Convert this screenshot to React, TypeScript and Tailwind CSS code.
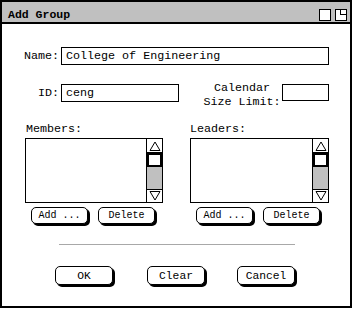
import React from "react";

function Up() {
  return (
    <svg width="14" height="12" viewBox="0 0 14 12" className="block">
      <path d="M7 2 L12 10.5 L2 10.5 Z" fill="white" stroke="black" strokeWidth="1" />
    </svg>
  );
}
function Down() {
  return (
    <svg width="14" height="12" viewBox="0 0 14 12" className="block">
      <path d="M7 10 L12 1.5 L2 1.5 Z" fill="white" stroke="black" strokeWidth="1" />
    </svg>
  );
}

function ListBox({ w }: { w: string }) {
  return (
    <div className={`${w} mt-[2px] h-[65px] border border-black bg-white flex justify-end`}>
      <div className="w-[16px] h-full border-l border-black flex flex-col">
        <div className="h-[14px] border-b border-black flex items-center justify-center">
          <Up />
        </div>
        <div className="h-[14px] border-2 border-black bg-white" />
        <div className="flex-1 bg-[#c0c0c0]" />
        <div className="h-[13px] border-t border-black flex items-center justify-center">
          <Down />
        </div>
      </div>
    </div>
  );
}

function SmallBtn({ label, cls }: { label: string; cls: string }) {
  return (
    <div
      className={`${cls} w-[57px] h-[17px] rounded-[5px] border border-black bg-white shadow-[2px_2px_0_0_#000] flex items-center justify-center text-[10px] leading-[12px]`}
    >
      {label}
    </div>
  );
}

function BigBtn({ label, cls }: { label: string; cls: string }) {
  return (
    <div
      className={`${cls} w-[58px] h-[19px] rounded-[5px] border border-black bg-white shadow-[2px_2px_0_0_#000] flex items-center justify-center text-[11.3px] leading-[14px]`}
    >
      {label}
    </div>
  );
}

export default function App() {
  return (
    <div className="w-[354px] h-[309px] bg-white font-['Liberation_Mono',monospace] text-black text-[11.7px] leading-[14px]">
      <div className="w-[352px] h-[308px] border-2 border-black flex flex-col">
        {/* Title bar */}
        <div className="h-[22px] shrink-0 bg-[#c0c0c0] border-b-2 border-black flex items-start justify-between pl-[6px] pr-[3px]">
          <div className="mt-[6px] font-bold text-[11.5px] leading-[14px]">Add Group</div>
          <div className="mt-[7px] flex gap-[4px]">
            <div className="w-[12px] h-[12px] border border-black bg-white" />
            <div className="w-[12px] h-[12px] border border-black bg-white relative">
              <div className="absolute left-[4px] top-0 w-[6px] h-[5px] border-l border-b border-black" />
            </div>
          </div>
        </div>

        {/* Body */}
        <div className="flex flex-col">
          {/* Name row */}
          <div className="mt-[23px] flex items-center h-[18px]">
            <div className="w-[57px] text-right">Name:</div>
            <div className="ml-[2px] w-[268px] h-[18px] border border-black flex items-center pl-[4px]">
              College of Engineering
            </div>
          </div>

          {/* ID row */}
          <div className="mt-[19px] flex items-start h-[18px]">
            <div className="w-[57px] h-[18px] flex items-center justify-end">ID:</div>
            <div className="ml-[2px] w-[118px] h-[18px] border border-black flex items-center pl-[4px]">
              ceng
            </div>
            <div className="ml-[24px] w-[78px] mt-[-3px] text-center leading-[14px]">
              <div>Calendar</div>
              <div>Size Limit:</div>
            </div>
            <div className="ml-[1px] w-[47px] h-[17px] border border-black" />
          </div>

          {/* Lists */}
          <div className="mt-[20px] flex">
            <div className="ml-[23px] flex flex-col">
              <div className="h-[14px] pl-[1px]">Members:</div>
              <ListBox w="w-[138px]" />
              <div className="mt-[4px] flex">
                <SmallBtn label="Add ..." cls="ml-[6px]" />
                <SmallBtn label="Delete" cls="ml-[10px]" />
              </div>
            </div>
            <div className="ml-[27px] flex flex-col">
              <div className="h-[14px]">Leaders:</div>
              <ListBox w="w-[139px]" />
              <div className="mt-[4px] flex">
                <SmallBtn label="Add ..." cls="ml-[6px]" />
                <SmallBtn label="Delete" cls="ml-[10px]" />
              </div>
            </div>
          </div>

          {/* Separator */}
          <div className="mt-[20px] ml-[57px] w-[236px] h-[1px] bg-[#a8a8a8]" />

          {/* Bottom buttons */}
          <div className="mt-[21px] flex">
            <BigBtn label="OK" cls="ml-[53px]" />
            <BigBtn label="Clear" cls="ml-[34px]" />
            <BigBtn label="Cancel" cls="ml-[32px]" />
          </div>
        </div>
      </div>
    </div>
  );
}
